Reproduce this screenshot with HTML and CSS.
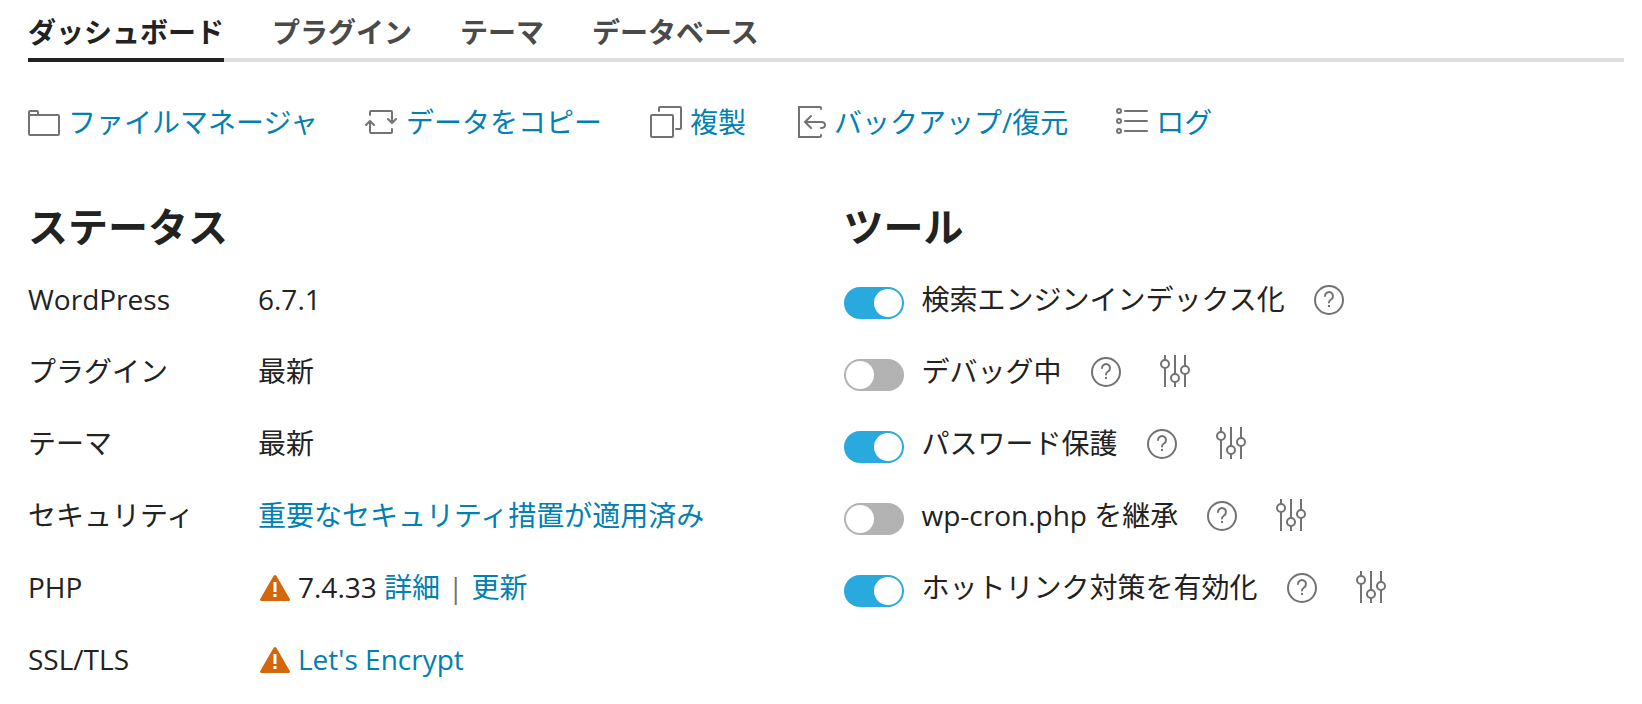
FILE: index.html
```html
<!DOCTYPE html>
<html lang="ja">
    <head>
        <meta charset="utf-8">
        <meta name="viewport" content="width=device-width, initial-scale=1">
        <title>WordPress</title>
        <link rel="stylesheet" href="styles.css">
    </head>

    <body>
        <!-- Icons -->
        <svg class="sprite" aria-hidden="true">
            <symbol id="help" viewBox="0 0 32 32">
                <circle cx="16" cy="16" r="14"/>
                <path d="M12 12a4 4 0 1 1 6 3.500c-1.400.8-2 1.300-2 3"/>
                <path stroke-linecap="butt" d="M16 21v2"/>
            </symbol>
            <symbol id="sliders" viewBox="0 0 32 32" overflow="visible">
                <g stroke-linecap="butt">
                    <path d="M7-1v5M7 12v19M17-1v19M17 26v5M27-1v11M27 18v13"/>
                    <circle cx="7" cy="8" r="4"/>
                    <circle cx="17" cy="22" r="4"/>
                    <circle cx="27" cy="14" r="4"/>
                </g>
            </symbol>
            <symbol id="warning" viewBox="0 0 32 32">
                <path class="warning-shape" d="M15.500 5q1.500-2 3 0L31.800 28q.6 2-1.200 2H3.400q-1.800 0-1.200-2z"/>
                <path class="warning-mark" d="M17 11v10M17 23v3"/>
            </symbol>
        </svg>

        <nav class="tabs">
            <a class="tab active" href="#dashboard">ダッシュボード</a>
            <a class="tab" href="#plugins">プラグイン</a>
            <a class="tab" href="#themes">テーマ</a>
            <a class="tab" href="#database">データベース</a>
        </nav>

        <div class="toolbar">
            <a class="action" href="#files">
                <svg class="icon" viewBox="0 0 32 32"><path d="M1 10V6q0-1 1-1h7q1 0 1 1v2q0 1-1 1H1M1 9h29q1 0 1 1v18q0 1-1 1H2q-1 0-1-1z"/></svg>
                ファイルマネージャ
            </a>
            <a class="action" href="#copy">
                <svg class="icon" viewBox="0 0 32 32"><path d="M4 9V6q0-1 1-1h20q1 0 1 1v11M22 13l4 4 4-4M26 23v3q0 1-1 1H5q-1 0-1-1V15M0 19l4-4 4 4"/></svg>
                データをコピー
            </a>
            <a class="action" href="#clone">
                <svg class="icon" viewBox="0 0 32 32"><path d="M9 5V2q0-1 1-1h20q1 0 1 1v20q0 1-1 1h-4"/><rect x="1" y="9" width="22" height="22" rx="1"/></svg>
                複製
            </a>
            <a class="action" href="#backup">
                <svg class="icon" viewBox="0 0 32 32"><path d="M27 3V2q0-1-1-1H5v30h21q1 0 1-1v-1M17 10l-6 6 6 6M11 16h16q4 0 4 3t-4 3"/></svg>
                バックアップ/復元
            </a>
            <a class="action" href="#log">
                <svg class="icon" viewBox="0 0 32 32"><path d="M9 5h22M9 15h22M9 25h22"/><circle cx="3" cy="5" r="2"/><circle cx="3" cy="15" r="2"/><circle cx="3" cy="25" r="2"/></svg>
                ログ
            </a>
        </div>

        <div class="columns">
            <!-- Status -->
            <section>
                <h2>ステータス</h2>
                <dl class="status">
                    <dt>WordPress</dt>
                    <dd>6.7.1</dd>
                    <dt>プラグイン</dt>
                    <dd>最新</dd>
                    <dt>テーマ</dt>
                    <dd>最新</dd>
                    <dt>セキュリティ</dt>
                    <dd><a href="#security">重要なセキュリティ措置が適用済み</a></dd>
                    <dt>PHP</dt>
                    <dd>
                        <svg class="warning"><use href="#warning"/></svg>
                        <span>7.4.33 <a href="#php">詳細</a></span>
                        <span class="divider">|</span>
                        <a href="#update">更新</a>
                    </dd>
                    <dt>SSL/TLS</dt>
                    <dd>
                        <svg class="warning"><use href="#warning"/></svg>
                        <a href="#ssl">Let's Encrypt</a>
                    </dd>
                </dl>
            </section>

            <!-- Tools -->
            <section>
                <h2>ツール</h2>
                <div class="tool">
                    <input class="switch" type="checkbox" id="indexing" checked>
                    <label for="indexing">検索エンジンインデックス化</label>
                    <button class="icon-button" type="button" aria-label="ヘルプ"><svg class="icon"><use href="#help"/></svg></button>
                </div>
                <div class="tool">
                    <input class="switch" type="checkbox" id="debug">
                    <label for="debug">デバッグ中</label>
                    <button class="icon-button" type="button" aria-label="ヘルプ"><svg class="icon"><use href="#help"/></svg></button>
                    <button class="icon-button settings" type="button" aria-label="設定"><svg class="icon"><use href="#sliders"/></svg></button>
                </div>
                <div class="tool">
                    <input class="switch" type="checkbox" id="password" checked>
                    <label for="password">パスワード保護</label>
                    <button class="icon-button" type="button" aria-label="ヘルプ"><svg class="icon"><use href="#help"/></svg></button>
                    <button class="icon-button settings" type="button" aria-label="設定"><svg class="icon"><use href="#sliders"/></svg></button>
                </div>
                <div class="tool">
                    <input class="switch" type="checkbox" id="cron">
                    <label for="cron">wp-cron.php を継承</label>
                    <button class="icon-button" type="button" aria-label="ヘルプ"><svg class="icon"><use href="#help"/></svg></button>
                    <button class="icon-button settings" type="button" aria-label="設定"><svg class="icon"><use href="#sliders"/></svg></button>
                </div>
                <div class="tool">
                    <input class="switch" type="checkbox" id="hotlink" checked>
                    <label for="hotlink">ホットリンク対策を有効化</label>
                    <button class="icon-button" type="button" aria-label="ヘルプ"><svg class="icon"><use href="#help"/></svg></button>
                    <button class="icon-button settings" type="button" aria-label="設定"><svg class="icon"><use href="#sliders"/></svg></button>
                </div>
            </section>
        </div>
    </body>
</html>
```
FILE: styles.css
```css
*{
    box-sizing: border-box;
}

body{
    margin: 0;
    padding: 8px 18px 8px 28px;
    background-color: white;
    color: #222;
    font-family: "Open Sans", "Noto Sans CJK JP", sans-serif;
    font-size: 28px;
    line-height: 40px;
}

a{
    color: #0080b3;
    text-decoration: none;
}

.sprite{
    display: none;
}

.icon{
    display: block;
    flex: none;
    width: 32px;
    height: 32px;
    overflow: visible;
    fill: none;
    stroke: #737373;
    stroke-width: 2;
    stroke-linecap: round;
}

/* Tabs */
.tabs{
    display: flex;
    gap: 48px;
    box-shadow: inset 0 -4px #ddd;
}

.tab{
    padding: 4px 0 6px;
    border-bottom: 4px solid transparent;
    color: #4a4a4a;
    font-weight: 600;
}

.tab.active{
    border-color: #222;
    color: #222;
}

/* Toolbar */
.toolbar{
    display: flex;
    flex-wrap: wrap;
    gap: 16px 48px;
    padding: 40px 0;
}

.action{
    display: flex;
    align-items: center;
    gap: 8px;
}

.columns{
    display: grid;
    grid-template-columns: 1fr 1fr;
    gap: 35px;
    padding-top: 16px;
}

h2{
    margin: 0;
    padding-bottom: 8px;
    font-size: 40px;
    font-weight: 600;
    line-height: 58px;
}

/* Status */
.status{
    display: grid;
    grid-template-columns: 230px 1fr;
    grid-auto-rows: 72px;
    align-items: center;
    margin: 0;
}

.status dt,
.status dd,
.tool label{
    padding-bottom: 2px;
}

.status dd{
    display: flex;
    align-items: center;
    gap: 8px;
    margin: 0;
}

.warning{
    width: 32px;
    height: 32px;
}

.warning-shape{
    fill: #d4670b;
}

.warning-mark{
    stroke: white;
    stroke-width: 3;
}

.divider{
    color: #737373;
}

/* Tools */
.tool{
    display: flex;
    align-items: center;
    height: 72px;
}

.switch{
    flex: none;
    appearance: none;
    width: 60px;
    height: 32px;
    margin: 6px 18px 0 0;
    padding: 2px;
    border-radius: 16px;
    background-color: #b3b3b3;
}

.switch::before{
    content: "";
    display: block;
    width: 28px;
    height: 28px;
    border-radius: 50%;
    background-color: white;
}

.switch:checked{
    background-color: #28aade;
}

.switch:checked::before{
    margin-left: auto;
}

.icon-button{
    margin: 0 0 0 28px;
    padding: 0;
    border: 0;
    background: none;
    cursor: pointer;
}

.icon-button.settings{
    margin-left: 36px;
}
```
